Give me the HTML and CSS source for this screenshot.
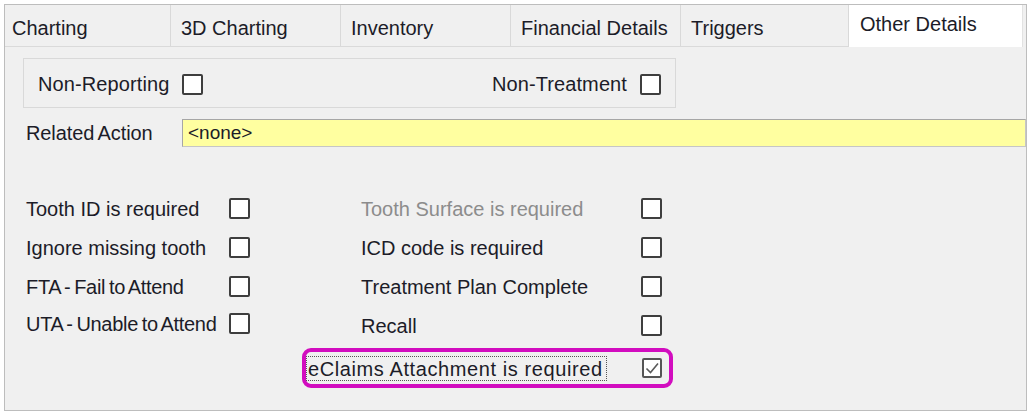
FILE: index.html
```html
<!DOCTYPE html>
<html lang="en">

<head>
    <meta charset="UTF-8">
    <meta name="viewport" content="width=device-width, initial-scale=1.0">
    <title>Other Details</title>
    <link rel="stylesheet" href="styles.css">
</head>

<body>
    <div class="window">
        <div class="tabs">
            <div class="tab tab-first">Charting</div>
            <div class="tab">3D Charting</div>
            <div class="tab">Inventory</div>
            <div class="tab">Financial Details</div>
            <div class="tab tab-narrow">Triggers</div>
            <div class="tab tab-active">Other Details</div>
        </div>

        <div class="panel">
            <div class="group">
                <label class="pair">Non-Reporting <input type="checkbox" class="box"></label>
                <label class="pair">Non-Treatment <input type="checkbox" class="box"></label>
            </div>

            <div class="related">
                <span class="related-label">Related Action</span>
                <div class="combo">&lt;none&gt;</div>
            </div>

            <div class="options">
                <div class="col col-left">
                    <label class="row"><span class="row-label">Tooth ID is required</span><input type="checkbox" class="box"></label>
                    <label class="row"><span class="row-label">Ignore missing tooth</span><input type="checkbox" class="box"></label>
                    <label class="row"><span class="row-label tight">FTA - Fail to Attend</span><input type="checkbox" class="box"></label>
                    <label class="row row-up"><span class="row-label tight">UTA - Unable to Attend</span><input type="checkbox" class="box"></label>
                </div>

                <div class="col col-right">
                    <label class="row"><span class="row-label disabled">Tooth Surface is required</span><input type="checkbox" class="box"></label>
                    <label class="row"><span class="row-label">ICD code is required</span><input type="checkbox" class="box"></label>
                    <label class="row"><span class="row-label">Treatment Plan Complete</span><input type="checkbox" class="box"></label>
                    <label class="row"><span class="row-label">Recall</span><input type="checkbox" class="box"></label>
                    <label class="row row-highlight">
                        <span class="focus">eClaims Attachment is required</span>
                        <span class="box box-checked">
                            <svg width="16" height="16" viewBox="0 0 16 16">
                                <path d="M2.5 8.5 L6.5 12.5 L14 3.5" fill="none" stroke="#5a5a5a" stroke-width="1.6"/>
                            </svg>
                        </span>
                    </label>
                </div>
            </div>
        </div>
    </div>
</body>

</html>
```

FILE: styles.css
```css
body {
    font-family: 'Liberation Sans', Arial, sans-serif;
    font-size: 20px;
    color: #1c1c28;
    background-color: #fff;
    margin: 0;
    padding: 0;
}

.window {
    margin: 4px 0 0 4px;
    width: 1023px;
    height: 407px;
    box-sizing: border-box;
    border: 1px solid #bdbdbd;
    background-color: #f0f0f0;
}

/* tab strip */
.tabs {
    display: flex;
    height: 42px;
}

.tab {
    width: 170px;
    height: 42px;
    box-sizing: border-box;
    display: flex;
    align-items: center;
    padding: 5px 0 0 10px;
    border-right: 1px solid #d9d9d9;
    border-bottom: 1px solid #dadada;
}

.tab-first {
    width: 166px;
    padding-left: 7px;
}

.tab-narrow {
    width: 168px;
}

.tab-active {
    width: 174px;
    background-color: #fff;
    border-bottom: none;
    border-right: 1px solid #e2e2e2;
    padding: 0 0 3px 11px;
}

/* panel */
.panel {
    padding: 11px 0 0 18px;
}

.group {
    width: 653px;
    height: 50px;
    box-sizing: border-box;
    border: 1px solid #d9d9d9;
    display: flex;
    align-items: center;
    justify-content: space-between;
    padding: 2px 14px 0 14px;
}

.pair {
    display: flex;
    align-items: center;
    gap: 13px;
    letter-spacing: 0.1px;
}

.box {
    appearance: none;
    -webkit-appearance: none;
    margin: 0;
    width: 21px;
    height: 21px;
    box-sizing: border-box;
    border: 2px solid #3e3e3e;
    border-radius: 2px;
    background-color: #fff;
    flex-shrink: 0;
}

.related {
    display: flex;
    align-items: center;
    margin-top: 11px;
}

.related-label {
    width: 156px;
    margin-left: 3px;
    letter-spacing: -0.1px;
    word-spacing: -1px;
}

.combo {
    flex: 1;
    height: 28px;
    box-sizing: border-box;
    background-color: #ffffa0;
    border: 1px solid #c6c6c6;
    border-top-color: #a6a6a6;
    border-left-color: #a6a6a6;
    padding-left: 5px;
    display: flex;
    align-items: center;
    font-size: 19px;
}

/* checkbox options */
.options {
    display: flex;
    margin: 42px 0 0 3px;
    gap: 111px;
}

.col {
    display: flex;
    flex-direction: column;
}

.row {
    height: 39px;
    display: flex;
    align-items: center;
}

.row-label {
    white-space: nowrap;
    padding-top: 2px;
}

.row-up {
    margin-top: -2px;
}

.col-left .row-label {
    width: 203px;
}

.col-right .row-label {
    width: 280px;
}

.tight {
    word-spacing: -1.5px;
    letter-spacing: -0.3px;
}

.disabled {
    color: #8c8c8c;
}

.row-highlight {
    margin: 3px 0 0 -59px;
    width: 371px;
    height: 40px;
    box-sizing: border-box;
    border: 4px solid #d20dbf;
    border-radius: 9px;
}

.focus {
    width: 301px;
    height: 25px;
    box-sizing: border-box;
    border: 1px dotted #555;
    padding: 2px 0 0 1px;
    display: flex;
    align-items: center;
    margin-right: 35px;
    letter-spacing: 0.6px;
    white-space: nowrap;
}

.box-checked {
    display: flex;
    align-items: center;
    justify-content: center;
    width: 20px;
    height: 20px;
    border-color: #555;
}
```
